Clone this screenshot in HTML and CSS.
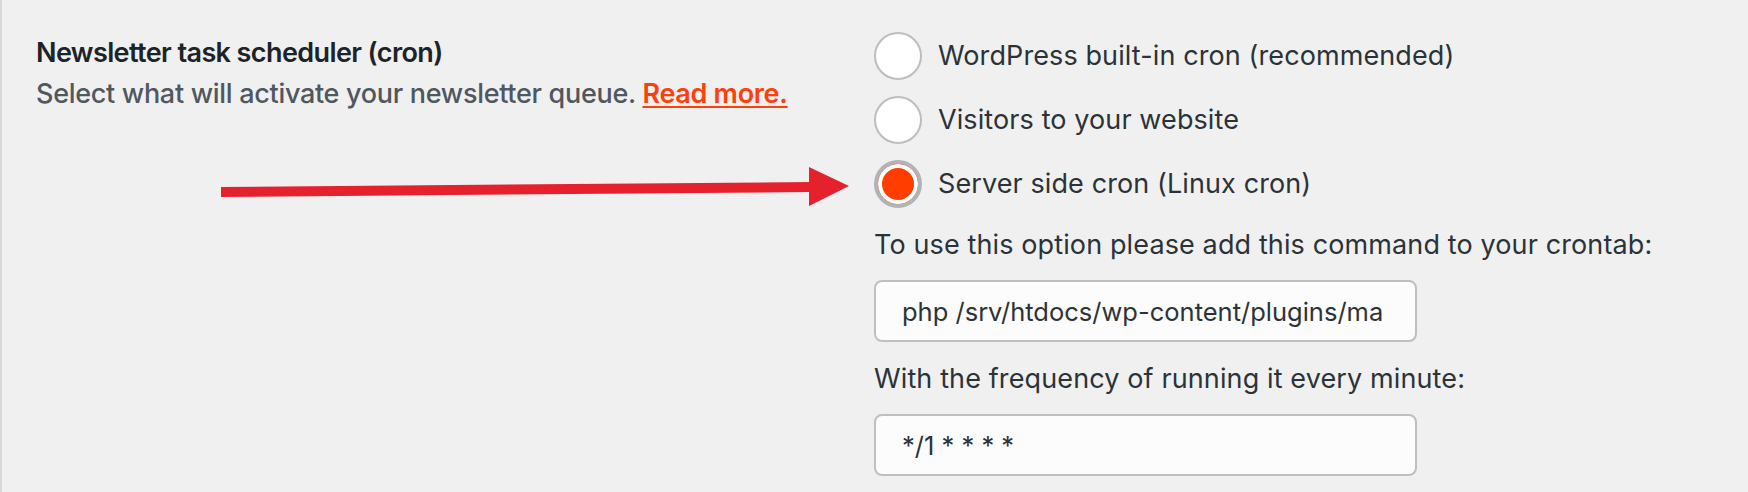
FILE: index.html
```html
<!DOCTYPE html>
<html lang="en">
<head>
    <meta charset="UTF-8">
    <title>Newsletter task scheduler</title>
    <meta name="viewport" content="width=device-width, initial-scale=1.0">
    <link rel="stylesheet" href="styles.css">
</head>
<body>
    <div class="settings-row">
        <div class="label-col">
            <h2 class="setting-title">Newsletter task scheduler (cron)</h2>
            <p class="setting-desc">Select what will activate your newsletter queue. <a href="#" class="read-more">Read more.</a></p>
        </div>
        <div class="field-col">
            <div class="radio-list">
                <label class="radio-row">
                    <input type="radio" name="cron" value="wordpress">
                    <span>WordPress built-in cron (recommended)</span>
                </label>
                <label class="radio-row">
                    <input type="radio" name="cron" value="visitors">
                    <span>Visitors to your website</span>
                </label>
                <label class="radio-row">
                    <input type="radio" name="cron" value="linux" checked>
                    <span>Server side cron (Linux cron)</span>
                </label>
            </div>
            <p class="field-note">To use this option please add this command to your crontab:</p>
            <input class="text-field" type="text" readonly value="php /srv/htdocs/wp-content/plugins/mailpoet/mailpoet-cron.php /srv/htdocs">
            <p class="field-note">With the frequency of running it every minute:</p>
            <input class="text-field" type="text" readonly value="*/1 * * * *">
        </div>

        <!-- annotation arrow pointing at the selected option -->
        <svg class="arrow" width="1748" height="492" viewBox="0 0 1748 492">
            <polygon points="221,187 811,182 811,192 221,197" fill="#e6212e"/>
            <polygon points="809,167 849,186 809,206" fill="#e6212e"/>
        </svg>
    </div>
</body>
</html>
```

FILE: styles.css
```css
body {
    margin: 0;
    padding: 0;
    background-color: #f0f0f1;
    font-family: Inter, "Noto Sans", Arial, sans-serif;
    color: #2c3338;
    height: 492px;
    overflow: hidden;
}
.settings-row {
    position: relative;
    display: flex;
    height: 492px;
    box-sizing: border-box;
    padding-top: 32px;
    border-left: 2px solid #d8d8db;
}
.label-col {
    width: 872px;
    box-sizing: border-box;
    padding-left: 34px;
}
.setting-title {
    margin: 2px 0 0 0;
    font-size: 27px;
    line-height: 38px;
    font-weight: 600;
    letter-spacing: -0.6px;
    color: #1d2327;
}
.setting-desc {
    margin: 3px 0 0 0;
    font-size: 27px;
    line-height: 38px;
    font-weight: 500;
    letter-spacing: -0.3px;
    color: #50575e;
}
.read-more {
    color: #fd3f0a;
    font-weight: 600;
    text-decoration: underline;
    text-underline-offset: 3px;
    text-decoration-thickness: 2px;
}
.field-col {
    display: flex;
    flex-direction: column;
    align-items: flex-start;
}
.radio-list {
    display: flex;
    flex-direction: column;
    gap: 16px;
}
.radio-row {
    display: flex;
    align-items: center;
    gap: 16px;
    font-size: 27px;
    line-height: 38px;
    letter-spacing: 0.1px;
    color: #2c3338;
}
.radio-row input {
    appearance: none;
    -webkit-appearance: none;
    margin: 0;
    width: 48px;
    height: 48px;
    border: 2px solid #bdbdc0;
    border-radius: 50%;
    background-color: #fff;
    box-sizing: border-box;
}
.radio-row input:checked {
    border: 4px solid #b3b3b6;
    background-color: #ff3d00;
    box-shadow: inset 0 0 0 4px #fff;
}
.field-note {
    margin: 18px 0 0 0;
    font-size: 27px;
    line-height: 38px;
    letter-spacing: 0.12px;
    color: #2c3338;
}
.text-field {
    margin-top: 16px;
    width: 543px;
    height: 62px;
    box-sizing: border-box;
    padding: 0 31px 0 26px;
    border: 2px solid #bfbfc2;
    border-radius: 8px;
    background-color: #fcfcfd;
    font-family: Inter, "Noto Sans", Arial, sans-serif;
    font-size: 25.5px;
    color: #2c3338;
    outline: none;
}
.arrow {
    position: absolute;
    top: 0;
    left: -2px;
    pointer-events: none;
}
```
